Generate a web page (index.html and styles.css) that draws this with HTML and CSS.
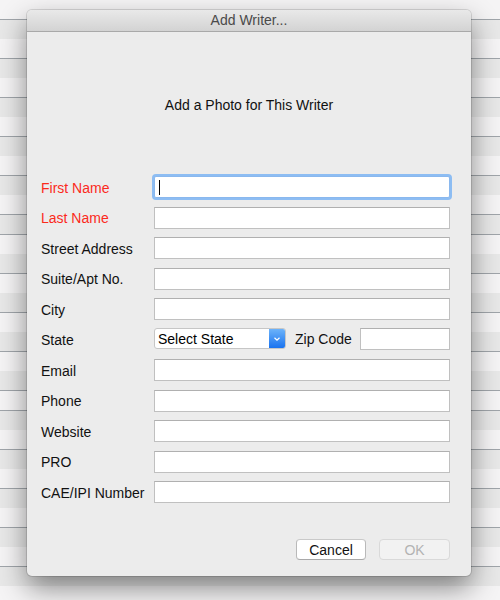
FILE: index.html
```html
<!DOCTYPE html>
<html>
<head>
<meta charset="utf-8">
<link rel="stylesheet" href="styles.css">
</head>
<body>
<div class="desk">
  <div class="dialog">
    <div class="titlebar">Add Writer...</div>
    <div class="photo">Add a Photo for This Writer</div>
    <div class="form">
      <div class="row"><span class="label req">First Name</span><div class="field focus"><span class="caret"></span></div></div>
      <div class="row"><span class="label req">Last Name</span><div class="field"></div></div>
      <div class="row"><span class="label">Street Address</span><div class="field"></div></div>
      <div class="row"><span class="label">Suite/Apt No.</span><div class="field"></div></div>
      <div class="row"><span class="label">City</span><div class="field"></div></div>
      <div class="row"><span class="label">State</span>
        <div class="select"><span class="sel-text">Select State</span><span class="sel-btn"><svg width="8" height="6" viewBox="0 0 8 6"><path d="M1.5 1.8 L4 4.2 L6.5 1.8" fill="none" stroke="#fff" stroke-width="1.2"/></svg></span></div>
        <span class="ziplabel">Zip Code</span>
        <div class="field zip"></div>
      </div>
      <div class="row"><span class="label">Email</span><div class="field"></div></div>
      <div class="row"><span class="label">Phone</span><div class="field"></div></div>
      <div class="row"><span class="label">Website</span><div class="field"></div></div>
      <div class="row"><span class="label">PRO</span><div class="field"></div></div>
      <div class="row"><span class="label">CAE/IPI Number</span><div class="field"></div></div>
    </div>
    <div class="buttons">
      <div class="btn">Cancel</div>
      <div class="btn disabled">OK</div>
    </div>
  </div>
</div>
</body>
</html>
```

FILE: styles.css
```css
html, body {
  margin: 0;
  padding: 0;
}
body {
  width: 500px;
  height: 600px;
  overflow: hidden;
  font-family: "Liberation Sans", Arial, sans-serif;
  font-size: 14px;
  color: #111;
  background:
    repeating-linear-gradient(to bottom,
      #f5f4f5 0px, #f5f4f5 19px, #a0a5aa 19px, #a0a5aa 19.55px,
      #e8e8e8 19.55px, #e8e8e8 38.6px, #a0a5aa 38.6px, #a0a5aa 39.1px);
}
.desk {
  padding: 10px 0 0 27px;
}
.dialog {
  width: 444px;
  height: 566px;
  background: #ececec;
  border-radius: 5px;
  box-shadow: 0 0 0 1px rgba(0,0,0,0.12), 0 12px 28px rgba(0,0,0,0.45);
  display: flex;
  flex-direction: column;
  overflow: hidden;
}
.titlebar {
  height: 21px;
  line-height: 21px;
  text-align: center;
  color: #4a4a4a;
  background: linear-gradient(to bottom, #e9e9e9, #d3d3d3);
  border-bottom: 1px solid #a9a9a9;
  font-size: 14px;
}
.photo {
  height: 144px;
  box-sizing: border-box;
  padding-top: 65px;
  line-height: 17px;
  text-align: center;
  color: #111;
}
.form {
  display: flex;
  flex-direction: column;
  gap: 8.5px;
  padding: 0 21px 0 14px;
}
.row {
  display: flex;
  align-items: center;
  height: 22px;
}
.label {
  width: 113px;
  flex: none;
  color: #111;
  line-height: 22px;
  padding-top: 1px;
}
.label.req {
  color: #fb2a1c;
}
.field {
  flex: 1;
  height: 22px;
  box-sizing: border-box;
  background: #fff;
  border: 1px solid #c0c0c0;
  border-top-color: #b0b0b0;
  position: relative;
}
.field.focus {
  border-color: #8ab8ee;
  box-shadow: 0 0 0 2px #8dbdf3;
  border-radius: 2px;
}
.caret {
  position: absolute;
  left: 4px;
  top: 3px;
  width: 1px;
  height: 15px;
  background: #000;
}
.select {
  width: 132px;
  height: 21px;
  box-sizing: border-box;
  display: flex;
  background: #fff;
  border: 1px solid #c6c6c6;
  border-radius: 3px;
  overflow: hidden;
  flex: none;
  margin-top: -2px;
}
.sel-text {
  flex: 1;
  padding-left: 3px;
  line-height: 20px;
  color: #000;
}
.sel-btn {
  width: 16px;
  background: linear-gradient(to bottom, #6cb3fa, #1a73ef);
  display: flex;
  align-items: center;
  justify-content: center;
}
.ziplabel {
  margin-left: 9px;
  width: 65px;
  flex: none;
  color: #111;
  margin-top: -1px;
}
.field.zip {
  flex: none;
  width: 90px;
  margin-top: -2px;
}
.buttons {
  display: flex;
  justify-content: flex-end;
  gap: 13px;
  padding: 36px 21px 0 0;
}
.btn {
  width: 70px;
  height: 21px;
  box-sizing: border-box;
  border: 1px solid #b9b9b9;
  border-top-color: #c9c9c9;
  border-bottom-color: #a9a9a9;
  border-radius: 4px;
  background: #fff;
  text-align: center;
  line-height: 20px;
  color: #111;
}
.btn.disabled {
  width: 71px;
  background: #f2f2f2;
  border-color: #d9d9d9;
  color: #b3b3b3;
}
```
